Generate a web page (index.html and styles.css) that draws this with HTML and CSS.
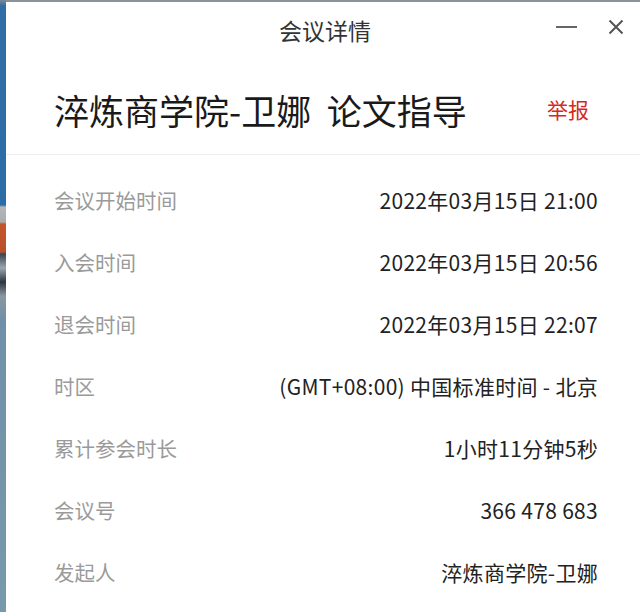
FILE: index.html
```html
<!DOCTYPE html>
<html lang="zh-CN">
<head>
  <meta charset="UTF-8" />
  <title>会议详情</title>
  <link rel="stylesheet" href="styles.css">
</head>
<body>
  <div class="desktop"></div>

  <div class="window">
    <header class="titlebar">
      <span></span>
      <h1>会议详情</h1>
      <div class="controls">
        <span class="min"></span>
        <svg class="close" width="16" height="16" viewBox="0 0 16 16">
          <path d="M1.5 1.5 L14.5 14.5 M14.5 1.5 L1.5 14.5" stroke="#555" stroke-width="2" fill="none"/>
        </svg>
      </div>
    </header>

    <section class="heading">
      <h2>淬炼商学院-卫娜&nbsp;&nbsp;论文指导</h2>
      <a class="report">举报</a>
    </section>

    <dl class="details">
      <div class="row"><dt>会议开始时间</dt><dd>2022年03月15日 21:00</dd></div>
      <div class="row"><dt>入会时间</dt><dd>2022年03月15日 20:56</dd></div>
      <div class="row"><dt>退会时间</dt><dd>2022年03月15日 22:07</dd></div>
      <div class="row"><dt>时区</dt><dd>(GMT+08:00) 中国标准时间 - 北京</dd></div>
      <div class="row"><dt>累计参会时长</dt><dd>1小时11分钟5秒</dd></div>
      <div class="row"><dt>会议号</dt><dd>366 478 683</dd></div>
      <div class="row"><dt>发起人</dt><dd>淬炼商学院-卫娜</dd></div>
    </dl>
  </div>
</body>
</html>
```

FILE: styles.css
```css
html, body {
  margin: 0;
  height: 100%;
}
body {
  display: flex;
  background: #8a929a;
  font-family: "Noto Sans CJK SC", "Noto Sans", sans-serif;
  overflow: hidden;
}
.desktop {
  width: 6px;
  flex: none;
  background: linear-gradient(to bottom,
    #7d8a96 0, #2f6fa6 6px, #2d6da5 205px,
    #b4b6b8 207px, #a9adb0 222px,
    #c4562c 224px, #b9502a 252px,
    #3a4450 254px, #9aa6ae 268px, #2c3640 282px, #8b97a0 296px,
    #6f90a8 320px, #7898ac 612px);
}
.window {
  flex: 1;
  margin-top: 2px;
  background: #fff;
}
.titlebar {
  height: 58px;
  display: grid;
  grid-template-columns: 1fr auto 1fr;
  align-items: center;
}
.titlebar h1 {
  margin: 0 0 3px;
  font-size: 23px;
  font-weight: normal;
  color: #333;
  padding-left: 4px;
}
.controls {
  display: flex;
  justify-content: flex-end;
  align-items: center;
  gap: 31px;
  padding-right: 16px;
  margin-bottom: 8px;
}
.min {
  width: 21px;
  height: 2px;
  background: #666;
}
.heading {
  height: 95px;
  box-sizing: border-box;
  padding: 4px 51px 0 48px;
  display: flex;
  justify-content: space-between;
  align-items: center;
  border-bottom: 1px solid #ececec;
}
.heading h2 {
  margin: 0;
  font-size: 35px;
  font-weight: normal;
  color: #1a1a1a;
}
.report {
  color: #d42a1e;
  font-size: 21px;
}
.details {
  margin: 0;
  padding: 14px 42px 0 48px;
}
.row {
  height: 62px;
  display: flex;
  justify-content: space-between;
  align-items: center;
  font-size: 20.5px;
}
.row dt {
  color: #9a9a9a;
}
.row dd {
  margin: 0;
  color: #222;
  font-size: 21px;
  letter-spacing: 0.3px;
}
```
